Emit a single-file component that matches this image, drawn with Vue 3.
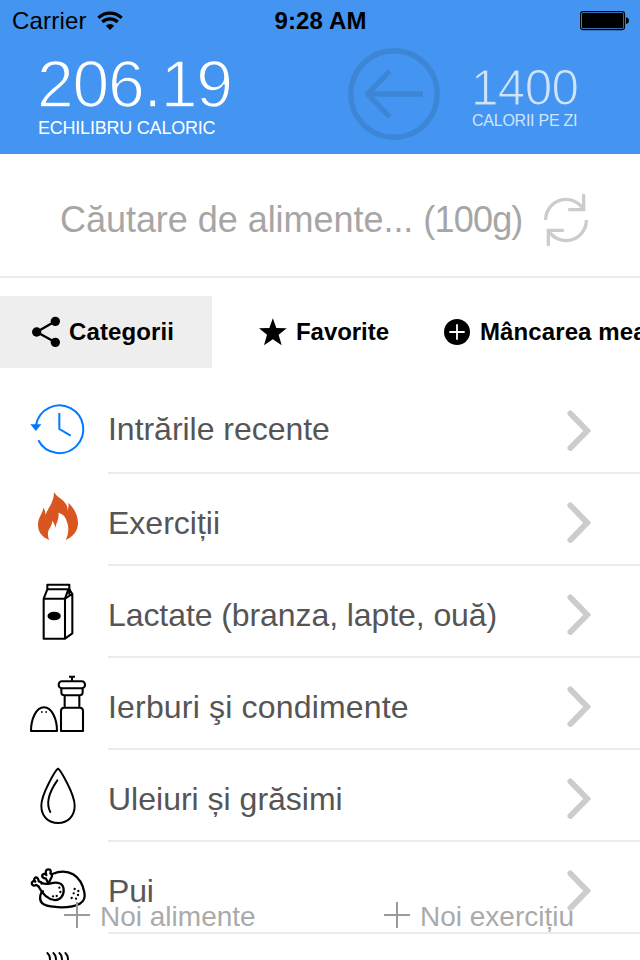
<script setup>
const rows = [
  { icon: 'recent', label: 'Intrările recente', box: '84 276 180 276', spacing: -0.03 },
  { icon: 'flame', label: 'Exerciții', box: '24 -18 180 276', spacing: 0 },
  { icon: 'milk', label: 'Lactate (branza, lapte, ouă)', box: '24 258 180 276', spacing: -0.08 },
  { icon: 'spice', label: 'Ierburi şi condimente', box: '24 -6 180 276', spacing: 0.18 },
  { icon: 'drop', label: 'Uleiuri și grăsimi', box: '24 270 180 276', spacing: 0 },
  { icon: 'chicken', label: 'Pui', box: '24 -39 180 276', spacing: -0.2 },
  { icon: 'steam', label: '', box: '24 237 180 276', spacing: 0 },
]
</script>

<template>
  <div class="screen">
    <header class="header">
      <div class="status">
        <div class="carrier">
          <span>Carrier</span>
          <svg class="wifi" viewBox="0 0 26 20" width="26" height="20">
            <g fill="none" stroke="#000" stroke-width="3.2">
              <path d="M1.4 6.8A16.5 16.5 0 0 1 24.6 6.8" />
              <path d="M5.3 11A11 11 0 0 1 20.7 11" />
            </g>
            <path d="M13 19L8.8 14.7A6 6 0 0 1 17.2 14.7Z" />
          </svg>
        </div>
        <div class="time">9:28 AM</div>
        <svg class="battery" viewBox="0 0 50 20" width="50" height="20">
          <rect x=".6" y=".6" width="44" height="18" rx="2.6" fill="none" stroke="#000" stroke-width="1.1" />
          <rect x="2" y="2" width="41.3" height="15.2" rx="1.2" />
          <path d="M46 6.2Q49 7 49 9.6T46 13Z" />
        </svg>
      </div>
      <div class="totals">
        <div class="balance">
          <div class="big">206.19</div>
          <div class="caption">ECHILIBRU CALORIC</div>
        </div>
        <svg class="back" viewBox="0 0 94 94" width="94" height="94" fill="none" stroke="#3d86d6" stroke-width="5.4">
          <circle cx="47" cy="47" r="43.2" />
          <path d="M42.5 24.2L20.5 47L42.5 69.8" stroke-linejoin="round" />
          <path d="M21 47H76" />
        </svg>
        <div class="goal">
          <div class="mid">1400</div>
          <div class="caption small">CALORII PE ZI</div>
        </div>
      </div>
    </header>

    <div class="search">
      <span class="placeholder">Căutare de alimente... <span class="unit">(100g)</span></span>
      <svg class="refresh" viewBox="660 30 156 180" width="52" height="60" fill="none" stroke="#ccc" stroke-width="10">
        <path d="M677 120A61 61 0 0 1 791 89" />
        <path d="M791 46V89H748" stroke-linecap="round" />
        <path d="M799 120A61 61 0 0 1 685 151" />
        <path d="M685 194V151H728" stroke-linecap="round" />
      </svg>
    </div>

    <nav class="tabs">
      <div class="tab active">
        <svg viewBox="90 72 96 102" width="32" height="34">
          <path d="M166 91L110 123L166 154" fill="none" stroke="#000" stroke-width="7" />
          <circle cx="166" cy="91" r="14" /><circle cx="110" cy="123" r="14" /><circle cx="166" cy="154" r="14" />
        </svg>
        <span>Categorii</span>
      </div>
      <div class="tab favorites">
        <svg viewBox="771 72 96 102" width="32" height="34">
          <path d="M818.5 82L829 111L860 112L836 131L845 163L818.5 145L792 163L801 131L777 112L808 111Z" />
        </svg>
        <span>Favorite</span>
      </div>
      <div class="tab mine">
        <svg viewBox="363 72 96 102" width="32" height="34">
          <circle cx="411" cy="123" r="39" />
          <path d="M388 123H434M411 100V146" stroke="#fff" stroke-width="5.5" />
        </svg>
        <span>Mâncarea mea</span>
      </div>
    </nav>

    <main class="list">
      <div v-for="row in rows" :key="row.icon" class="row">
        <svg class="icon" :viewBox="row.box" width="60" height="92">
          <g v-if="row.icon === 'recent'" fill="none" stroke="#007aff" stroke-width="6">
            <path d="M108 405A71.5 71.5 0 1 1 115 451" />
            <path d="M178 369V417L212 437" />
            <path d="M91 403H124L107.5 423Z" fill="#007aff" stroke="none" />
          </g>
          <path v-else-if="row.icon === 'flame'" fill="#d85620" d="M102 36C110 52 131 57 140 76Q144 84 142 92Q147 82 145 68C158 80 174 102 174 129C174 153 158 172 137 180C147 160 147 141 140 123C136 110 128 101 115 99C119 115 109 126 106 144C105 135 102 129 97 122C96 141 82 147 84 165Q84 173 88 180C66 171 54 155 54 134C54 112 68 102 70 83Q77 92 76 105C84 84 102 67 102 36Z" />
          <g v-else-if="row.icon === 'milk'" fill="none" stroke="#000" stroke-width="6.2" stroke-linejoin="round">
            <path d="M82 314H148V328H82ZM82 328L71 356H135L145 328M71 356V476H135V356" />
            <path d="M148 328L157 342V460L135 476M135 356L157 342M147 330L148 344" />
            <ellipse cx="102.5" cy="408" rx="17" ry="10" fill="#000" />
          </g>
          <g v-else-if="row.icon === 'spice'" fill="none" stroke="#000" stroke-width="6.2" stroke-linejoin="round">
            <path d="M33 213C33 178 48 142 72 142S111 178 111 213Z" />
            <path d="M63 156H68M76 156H81" stroke-width="5" />
            <path d="M147 50H165M156 50V64" />
            <rect x="116" y="64" width="79" height="21" rx="10" />
            <path d="M124 86V97Q124 106 133 106H179Q188 106 188 97V86M134 106V143M178 106V143" />
            <path d="M123 213V153Q123 143 133 143H179Q189 143 189 153V213Z" />
          </g>
          <g v-else-if="row.icon === 'drop'" fill="none" stroke="#000" stroke-width="5.8" stroke-linecap="round" stroke-linejoin="round">
            <path d="M114 326C107 330 64 402 64 437C64 468 84 489 114 489S164 468 164 437C164 402 121 330 114 326Z" />
            <path d="M112 361C91 391 75 426 91 456" />
          </g>
          <g v-else-if="row.icon === 'chicken'" fill="none" stroke="#000" stroke-width="6.8" stroke-linejoin="round" stroke-linecap="round">
            <path d="M97 57C145 37 183 61 193 112C200 144 173 157 123 157C76 156 56 148 61 121Q62 113 69 109" />
            <path d="M56 95C65 112 82 132 103 135C122 136 132 121 131 104C130 82 111 81 92 85Q76 89 66 84" />
            <path d="M56 95Q50 90 48 90C39 95 31 86 38 80C42 76 46 80 46 80C38 72 47 63 53 70Q56 74 56 79Q65 80 65 86" />
            <path d="M84 83L78 71C66 70 63 61 71 57Q75 55 79 60C75 50 78 42 86 43C96 44 91 55 91 55Q98 58 95 66L88 80" />
            <path d="M118 98h.1M121 111h.1M99 124h.1M110 123h.1M164 102h.1M175 108h.1M161 115h.1M174 120h.1M155 129h.1M168 131h.1" />
          </g>
          <g v-else fill="none" stroke="#000" stroke-width="5.6" stroke-linecap="round">
            <path v-for="n in 4" :key="n" :transform="`translate(${(n - 1) * 18} 0)`" d="M82 294C91 301 91 309 90 320" />
          </g>
        </svg>
        <div class="cell">
          <span class="label" :style="{ letterSpacing: row.spacing + 'px' }">{{ row.label }}</span>
          <svg v-if="row.label" class="chevron" viewBox="0 0 30 44" width="30" height="44">
            <path d="M6.4 4.4L23.2 21.7L6.4 39" fill="none" stroke="#ccc" stroke-width="5.8" stroke-linecap="round" />
          </svg>
        </div>
      </div>
    </main>

    <div class="actions">
      <div v-for="label in ['Noi alimente', 'Noi exercițiu']" :key="label" class="action">
        <svg viewBox="0 0 26 26" width="26" height="26"><path d="M0 13H26M13 0V26" stroke="#999" stroke-width="2" /></svg>
        <span>{{ label }}</span>
      </div>
    </div>
  </div>
</template>

<style>
body { background: #fff; }
</style>

<style scoped>
* { box-sizing: border-box; }
svg { display: block; flex: none; }
.screen { position: relative; width: 640px; height: 960px; overflow: hidden; background: #fff; font-family: "Liberation Sans", Arial, sans-serif; white-space: nowrap; }
.header { height: 154px; background: #4495f1; }
.status { display: grid; grid-template-columns: 1fr auto 1fr; height: 42px; padding: 0 11px 0 12px; align-items: center; font-size: 24px; line-height: 42px; }
.carrier { display: flex; align-items: center; gap: 10px; letter-spacing: 0.2px; }
.time { font-weight: 700; letter-spacing: 0.15px; }
.battery { justify-self: end; margin-right: -1px; }
.totals { display: flex; color: #fff; }
.balance { width: 308px; padding-left: 38px; }
/* The stroke in the header's colour thins the numerals to a light weight. */
.big { height: 76px; margin-left: -1px; font-size: 66px; line-height: 84px; letter-spacing: -1.2px; -webkit-text-stroke: 1.5px #4495f1; }
.caption { font-size: 18px; line-height: 20px; letter-spacing: -0.22px; }
.back { margin: 5px 0 0 39px; }
.goal { padding: 18px 0 0 31px; color: #cfe4fb; }
.mid { height: 51px; margin-left: -1px; font-size: 49.5px; line-height: 56px; letter-spacing: -0.7px; -webkit-text-stroke: 1.2px #4495f1; }
.small { font-size: 16px; letter-spacing: -0.25px; }
.search { display: flex; height: 124px; padding: 36px 0 0 60px; border-bottom: 2px solid #ebebeb; }
.placeholder { width: 480px; font-size: 36px; line-height: 60px; letter-spacing: -0.04px; color: #a6a6a6; }
.unit { letter-spacing: -0.8px; }
.tabs { display: flex; height: 72px; margin-top: 18px; font-size: 24px; font-weight: 700; }
.tab { display: flex; flex: none; align-items: center; gap: 7px; letter-spacing: 0.1px; }
.active { width: 212px; padding-left: 30px; background: #eee; }
.favorites { width: 229px; padding-left: 45px; letter-spacing: -0.05px; }
.list { margin-top: 14px; }
.row { display: flex; height: 92px; padding-left: 28px; }
.icon { margin-right: 20px; }
.cell { display: flex; flex: 1; align-items: center; justify-content: space-between; padding: 8px 46px 0 0; border-bottom: 2px solid #ebebeb; font-size: 32px; color: #555; }
.row:first-child .label { margin-top: -4px; }
.actions { position: absolute; left: 64px; top: 902px; display: flex; color: #aaa; font-size: 28px; line-height: 28px; }
.action { display: flex; flex: none; width: 320px; gap: 10px; align-items: flex-start; text-shadow: 0 0 24px rgba(255, 255, 255, 0.8); }
.action span { margin-top: 1px; }
</style>
